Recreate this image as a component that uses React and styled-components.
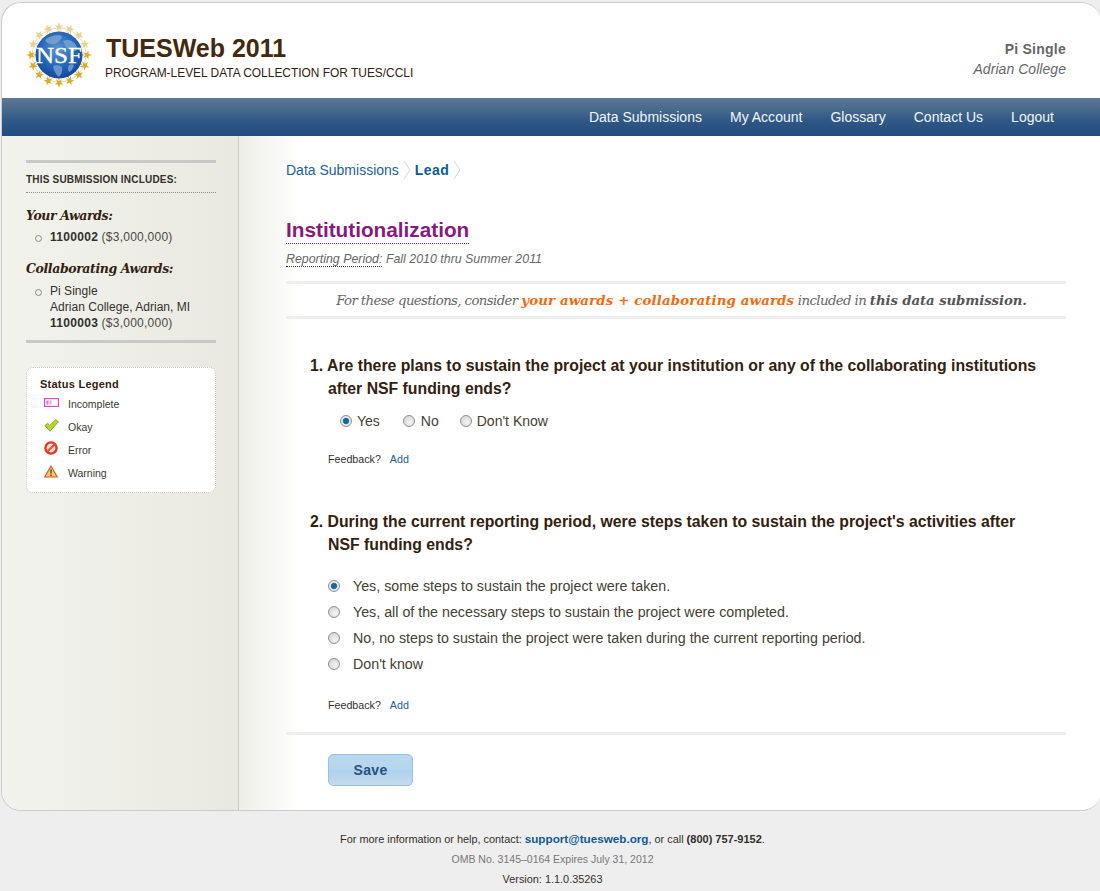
import React from "react";
import styled, { createGlobalStyle } from "styled-components";

const Global = createGlobalStyle`
  html, body { margin: 0; padding: 0; background: #eeeeee; }
  body { font-family: "Liberation Sans", Arial, sans-serif; color: #33210f; }
  * { box-sizing: border-box; }
`;
const Page = styled.div`
  width: 1100px;
  height: 891px;
  padding: 2px 0 0 1px;
  overflow: hidden;
  background: #eeeeee;
`;
const Shell = styled.div`
  height: 809px;
  width: 1100px;
  background: #fff;
  border: 1px solid #cccccc;
  border-right: 0;
  border-radius: 20px;
  overflow: hidden;
  display: flex;
  flex-direction: column;
`;
const Header = styled.header`
  height: 95px;
  flex: none;
  display: flex;
  align-items: flex-start;
  padding: 18px 35px 0 23px;
`;
const Brand = styled.div`
  margin-left: 13px;
  padding-top: 13px;
  flex: 1;
`;
const Title = styled.h1`
  margin: 0;
  font-size: 25px;
  line-height: 29px;
  font-weight: bold;
  color: #43290e;
`;
const Sub = styled.div`
  font-size: 11.93px;
  line-height: 14px;
  margin: 3px 0 0 -1px;
  color: #33210f;
`;
const User = styled.div`
  text-align: right;
  padding-top: 18px;
  font-size: 14px;
  line-height: 20px;
  color: #666;
  b { font-size: 14px; letter-spacing: 0.25px; }
  i { display: block; font-size: 14px; letter-spacing: 0.05px; }
`;
const Nav = styled.nav`
  flex: none;
  height: 38px;
  background: linear-gradient(#5a7796 0%, #4c6c8e 25%, #2e5786 62%, #234d80 100%);
  display: flex;
  justify-content: flex-end;
  align-items: center;
  gap: 28px;
  padding: 0 47px 0 0;
  a { color: #f2f5f8; font-size: 14px; text-decoration: none; letter-spacing: 0.01px; }
`;
const Body = styled.div`
  flex: 1;
  display: flex;
  min-height: 0;
`;
const Side = styled.aside`
  width: 237px;
  flex: none;
  border-right: 1px solid #c9c9c5;
  background: linear-gradient(90deg, #f3f3ee 0%, #e9e9e1 100%);
  padding: 24px 22px 0 24px;
`;
const SideBox = styled.div`
  border-top: 3px solid #c8c8c8;
  border-bottom: 3px solid #c8c8c8;
  padding-bottom: 9px;
`;
const SideHead = styled.h3`
  margin: 0;
  height: 30px;
  padding-top: 11px;
  border-bottom: 1px dotted #8e8e88;
  font-size: 10px;
  line-height: 12px;
  font-weight: bold;
  letter-spacing: 0.2px;
  color: #33302b;
`;
const AwardHead = styled.h4`
  margin: 15px 0 0;
  font-family: "DejaVu Serif", serif;
  font-style: italic;
  font-weight: bold;
  font-size: 12.5px;
  line-height: 16px;
  letter-spacing: -0.4px;
  color: #33210f;
`;
const AwardList = styled.ul`
  margin: ${p => p.$top}px 0 16px;
  padding: 0 0 0 24px;
  list-style: none;
  &:last-child { margin-bottom: 0; }
`;
const AwardItem = styled.li`
  position: relative;
  font-size: 12px;
  line-height: 16px;
  color: #33302b;
  letter-spacing: 0.03px;
  b { letter-spacing: 0.3px; }
  span { color: #4a4a44; letter-spacing: 0.25px; }
  &::before {
    content: "";
    position: absolute;
    left: -15px;
    top: 6px;
    width: 5px;
    height: 5px;
    border: 1.3px solid #8d8d70;
    border-radius: 50%;
  }
`;
const Legend = styled.div`
  margin-top: 24px;
  height: 126px;
  background: #fff;
  border: 1px dotted #c4c4c0;
  border-radius: 7px;
  padding: 9px 0 0 13px;
`;
const LegendTitle = styled.div`
  font-size: 11px;
  line-height: 14px;
  font-weight: bold;
  letter-spacing: 0.25px;
  color: #33210f;
  margin-bottom: 1px;
`;
const LegendRow = styled.div`
  display: flex;
  align-items: center;
  height: 23px;
  font-size: 10.5px;
  color: #3a3a30;
`;
const LegendIcon = styled.span`
  width: 28px;
  padding-left: 4px;
  display: flex;
  align-items: center;
  margin-top: -3px;
`;
const Main = styled.main`
  flex: 1;
  background: linear-gradient(90deg, #eeeee8 0px, #f5f5f1 25px, #ffffff 62px);
  padding: 0 35px 0 47px;
`;
const Crumbs = styled.div`
  height: 28px;
  margin-top: 20px;
  display: flex;
  align-items: center;
  font-size: 14px;
  color: #1c609b;
`;
const Chevron = styled.svg`
  width: 8px;
  height: 20px;
  margin: 0 4px 0 4px;
  flex: none;
`;
const Current = styled.b`
  color: #0d5a97;
  letter-spacing: 0.4px;
`;
const Heading = styled.h2`
  display: inline-block;
  margin: 34px 0 0;
  font-size: 20.75px;
  line-height: 24px;
  height: 26px;
  font-weight: bold;
  color: #861a7e;
  border-bottom: 1px dotted #861a7e;
`;
const Period = styled.div`
  font-size: 12.4px;
  font-style: italic;
  line-height: 14px;
  margin-top: 8px;
  color: #666;
  span { border-bottom: 1px dotted #333; }
`;
const Notice = styled.div`
  margin-top: 15px;
  height: 38px;
  border-top: 3px solid #eeeeee;
  border-bottom: 3px solid #eeeeee;
  display: flex;
  align-items: center;
  justify-content: center;
  padding-left: 11px;
  font-family: "DejaVu Serif", serif;
  font-style: italic;
  font-size: 13.3px;
  letter-spacing: -0.6px;
  color: #666;
  white-space: pre;
  em { font-weight: bold; color: #f26a10; letter-spacing: 0.16px; }
  b { color: #555; letter-spacing: -0.1px; }
`;
const Question = styled.section`
  padding-left: 24px;
  margin-top: ${p => p.$top}px;
`;
const QText = styled.h3`
  margin: 0;
  font-size: 15.8px;
  line-height: 23px;
  font-weight: bold;
  color: #33210f;
  padding: 0 24px 0 18px;
  text-indent: -18px;
`;
const Inline = styled.div`
  display: flex;
  align-items: center;
  margin: 9px 0 0 30px;
  height: 24px;
`;
const Choice = styled.label`
  display: flex;
  align-items: center;
  font-size: 14px;
  color: #444033;
  margin-right: ${p => p.$gap || 0}px;
`;
const Stack = styled.div`
  margin: 17px 0 0 18px;
  display: flex;
  flex-direction: column;
`;
const StackRow = styled.label`
  display: flex;
  align-items: center;
  height: 26px;
  font-size: 14.25px;
  color: #444033;
`;
const RadioDot = styled.span`
  width: 12px;
  height: 12px;
  border-radius: 50%;
  flex: none;
  margin-right: ${p => p.$gap}px;
  border: 1px solid #8f8f8f;
  background: ${p =>
    p.$on
      ? "radial-gradient(circle, #0f6a9e 0 2.4px, #4a87b0 3px, #e8e8e8 3.6px 100%)"
      : "radial-gradient(circle at 60% 65%, #f4f4f4 0, #cfcfcf 100%)"};
`;
const Feedback = styled.div`
  margin: ${p => p.$top}px 0 0 18px;
  font-size: 10.7px;
  line-height: 14px;
  color: #33302b;
  a { color: #1c609b; margin-left: 6px; text-decoration: none; }
`;
const Rule = styled.div`
  height: 3px;
  background: #eeeeee;
  margin-top: 20px;
`;
const Save = styled.button`
  display: block;
  width: 85px;
  height: 32px;
  margin: 19px 0 0 42px;
  border: 1px solid #97c2e6;
  border-radius: 5px;
  font: bold 14px "Liberation Sans", sans-serif;
  letter-spacing: 0.35px;
  color: #28517f;
  background: linear-gradient(#b8d8ee 0%, #b5d6ee 50%, #acd2f0 52%, #bed8ec 85%, #c7d9e8 100%);
`;
const Footer = styled.footer`
  text-align: center;
  font-size: 10.9px;
  color: #33302b;
  padding-top: 18px;
  padding-left: 4px;
`;
const FootLine = styled.div`
  height: 20px;
  line-height: 20px;
  color: ${p => p.$muted ? "#777" : "#33302b"};
  font-size: ${p => p.$muted ? "10.5px" : "10.9px"};
  a { color: #0d5a97; font-weight: bold; text-decoration: none; font-size: 11.7px; }
  b { font-size: 11px; }
`;

const starPath = "M34 1 L35.1 4.4 L38.6 4.5 L35.8 6.6 L36.8 10 L34 8 L31.2 10 L32.2 6.6 L29.4 4.5 L32.9 4.4 Z";

const NsfLogo = () => {
  const stars = Array.from({ length: 16 }, (_, i) => i * 22.5);
  return (
    <svg width="68" height="68" viewBox="0 0 68 68" style={{ flex: "none" }}>
      <defs>
        <radialGradient id="globe" cx="48%" cy="38%" r="68%">
          <stop offset="0" stopColor="#5f97d0" />
          <stop offset="0.55" stopColor="#2466b8" />
          <stop offset="1" stopColor="#0f3f90" />
        </radialGradient>
      </defs>
      <circle cx="34" cy="34" r="27" fill="none" stroke="#e8dcae" strokeWidth="1" />
      {stars.map(a => {
        const low = a > 75 && a < 285;
        return (
          <g key={a} transform={`rotate(${a} 34 34)`}>
            <path d={starPath} fill={low ? "#d9ad2a" : "#e6d293"} />
            <line x1="34" y1="9" x2="34" y2="13" stroke={low ? "#d9ad2a" : "#e6d293"} strokeWidth="1" />
          </g>
        );
      })}
      <circle cx="34" cy="34" r="23.5" fill="url(#globe)" />
      <path d="M20 19 q6 -5 15 -5 q4 2 0 5 q-4 5 -8 4 q-5 0 -7 -4Z M38 20 q8 -3 13 4 q3 5 -1 6 q-7 -1 -9 -4Z M28 45 q6 -2 9 1 q1 6 -3 10 q-5 -4 -6 -11Z M44 44 q5 -2 5 1 q-2 5 -5 6 q-2 -3 0 -7Z"
        fill="#86aed3" opacity="0.7" />
      <text x="34" y="41.5" textAnchor="middle" fontFamily="'Liberation Serif', serif"
        fontSize="23" fill="#ffffff" stroke="#ffffff" strokeWidth="0.3" textLength="46" lengthAdjust="spacingAndGlyphs">NSF</text>
    </svg>
  );
};

const Chev = () => (
  <Chevron viewBox="0 0 8 20">
    <path d="M1 1 L7 10 L1 19" fill="none" stroke="#d4d4d4" strokeWidth="1" />
  </Chevron>
);

const IconIncomplete = () => (
  <svg width="15" height="9" viewBox="0 0 15 9">
    <rect x="0.6" y="0.6" width="13.8" height="7.8" fill="#fff" stroke="#dc4cc6" strokeWidth="1.2" />
    <rect x="2.5" y="2.5" width="2" height="4" fill="#e26ed2" />
    <rect x="5.5" y="2.5" width="2" height="4" fill="#eaa3e0" />
  </svg>
);
const IconOkay = () => (
  <svg width="15" height="13" viewBox="0 0 15 13">
    <path d="M0.8 6.6 L3.6 4.4 L5.8 6.4 L11.8 0.6 L14.4 2.8 L6 12.2 Z" fill="#b8d62c" stroke="#77a01c" strokeWidth="0.9" strokeLinejoin="round" />
  </svg>
);
const IconError = () => (
  <svg width="14" height="14" viewBox="0 0 14 14">
    <circle cx="7" cy="7" r="5.6" fill="#fbe3d8" stroke="#e03a1c" strokeWidth="2.4" />
    <path d="M3 11 L11 3" stroke="#e8502e" strokeWidth="2.2" />
  </svg>
);
const IconWarning = () => (
  <svg width="14" height="13" viewBox="0 0 14 13">
    <path d="M7 1 L13.3 12 L0.7 12 Z" fill="#f7ca6c" stroke="#d9562a" strokeWidth="1.2" strokeLinejoin="round" />
    <path d="M7 4.5 V8.5 M7 9.6 V10.9" stroke="#3a2a10" strokeWidth="1.2" />
  </svg>
);

export default function App() {
  return (
    <Page>
      <Global />
      <Shell>
        <Header>
          <NsfLogo />
          <Brand>
            <Title>TUESWeb 2011</Title>
            <Sub>PROGRAM-LEVEL DATA COLLECTION FOR TUES/CCLI</Sub>
          </Brand>
          <User>
            <b>Pi Single</b>
            <i>Adrian College</i>
          </User>
        </Header>
        <Nav>
          <a>Data Submissions</a>
          <a>My Account</a>
          <a>Glossary</a>
          <a>Contact Us</a>
          <a>Logout</a>
        </Nav>
        <Body>
          <Side>
            <SideBox>
              <SideHead>THIS SUBMISSION INCLUDES:</SideHead>
              <AwardHead>Your Awards:</AwardHead>
              <AwardList $top={5}>
                <AwardItem><b>1100002</b> <span>($3,000,000)</span></AwardItem>
              </AwardList>
              <AwardHead>Collaborating Awards:</AwardHead>
              <AwardList $top={6}>
                <AwardItem>
                  Pi Single<br />
                  Adrian College, Adrian, MI<br />
                  <b>1100003</b> <span>($3,000,000)</span>
                </AwardItem>
              </AwardList>
            </SideBox>
            <Legend>
              <LegendTitle>Status Legend</LegendTitle>
              <LegendRow><LegendIcon><IconIncomplete /></LegendIcon>Incomplete</LegendRow>
              <LegendRow><LegendIcon><IconOkay /></LegendIcon>Okay</LegendRow>
              <LegendRow><LegendIcon><IconError /></LegendIcon>Error</LegendRow>
              <LegendRow><LegendIcon><IconWarning /></LegendIcon>Warning</LegendRow>
            </Legend>
          </Side>
          <Main>
            <Crumbs>
              Data Submissions<Chev /><Current>Lead</Current><Chev />
            </Crumbs>
            <Heading>Institutionalization</Heading>
            <Period><span>Reporting Period:</span> Fall 2010 thru Summer 2011</Period>
            <Notice>For these questions, consider <em>your awards + collaborating awards</em> included in <b>this data submission.</b></Notice>
            <Question $top={35}>
              <QText>1. Are there plans to sustain the project at your institution or any of the collaborating institutions after NSF funding ends?</QText>
              <Inline>
                <Choice $gap={23}><RadioDot $on $gap={5} />Yes</Choice>
                <Choice $gap={21}><RadioDot $gap={6} />No</Choice>
                <Choice><RadioDot $gap={5} />Don't Know</Choice>
              </Inline>
              <Feedback $top={19}>Feedback? <a>Add</a></Feedback>
            </Question>
            <Question $top={44}>
              <QText>2. During the current reporting period, were steps taken to sustain the project's activities after NSF funding ends?</QText>
              <Stack>
                <StackRow><RadioDot $on $gap={13} />Yes, some steps to sustain the project were taken.</StackRow>
                <StackRow><RadioDot $gap={13} />Yes, all of the necessary steps to sustain the project were completed.</StackRow>
                <StackRow><RadioDot $gap={13} />No, no steps to sustain the project were taken during the current reporting period.</StackRow>
                <StackRow><RadioDot $gap={13} />Don't know</StackRow>
              </Stack>
              <Feedback $top={21}>Feedback? <a>Add</a></Feedback>
            </Question>
            <Rule />
            <Save>Save</Save>
          </Main>
        </Body>
      </Shell>
      <Footer>
        <FootLine>For more information or help, contact: <a>support@tuesweb.org</a>, or call <b>(800) 757-9152</b>.</FootLine>
        <FootLine $muted>OMB No. 3145–0164 Expires July 31, 2012</FootLine>
        <FootLine>Version: 1.1.0.35263</FootLine>
      </Footer>
    </Page>
  );
}
